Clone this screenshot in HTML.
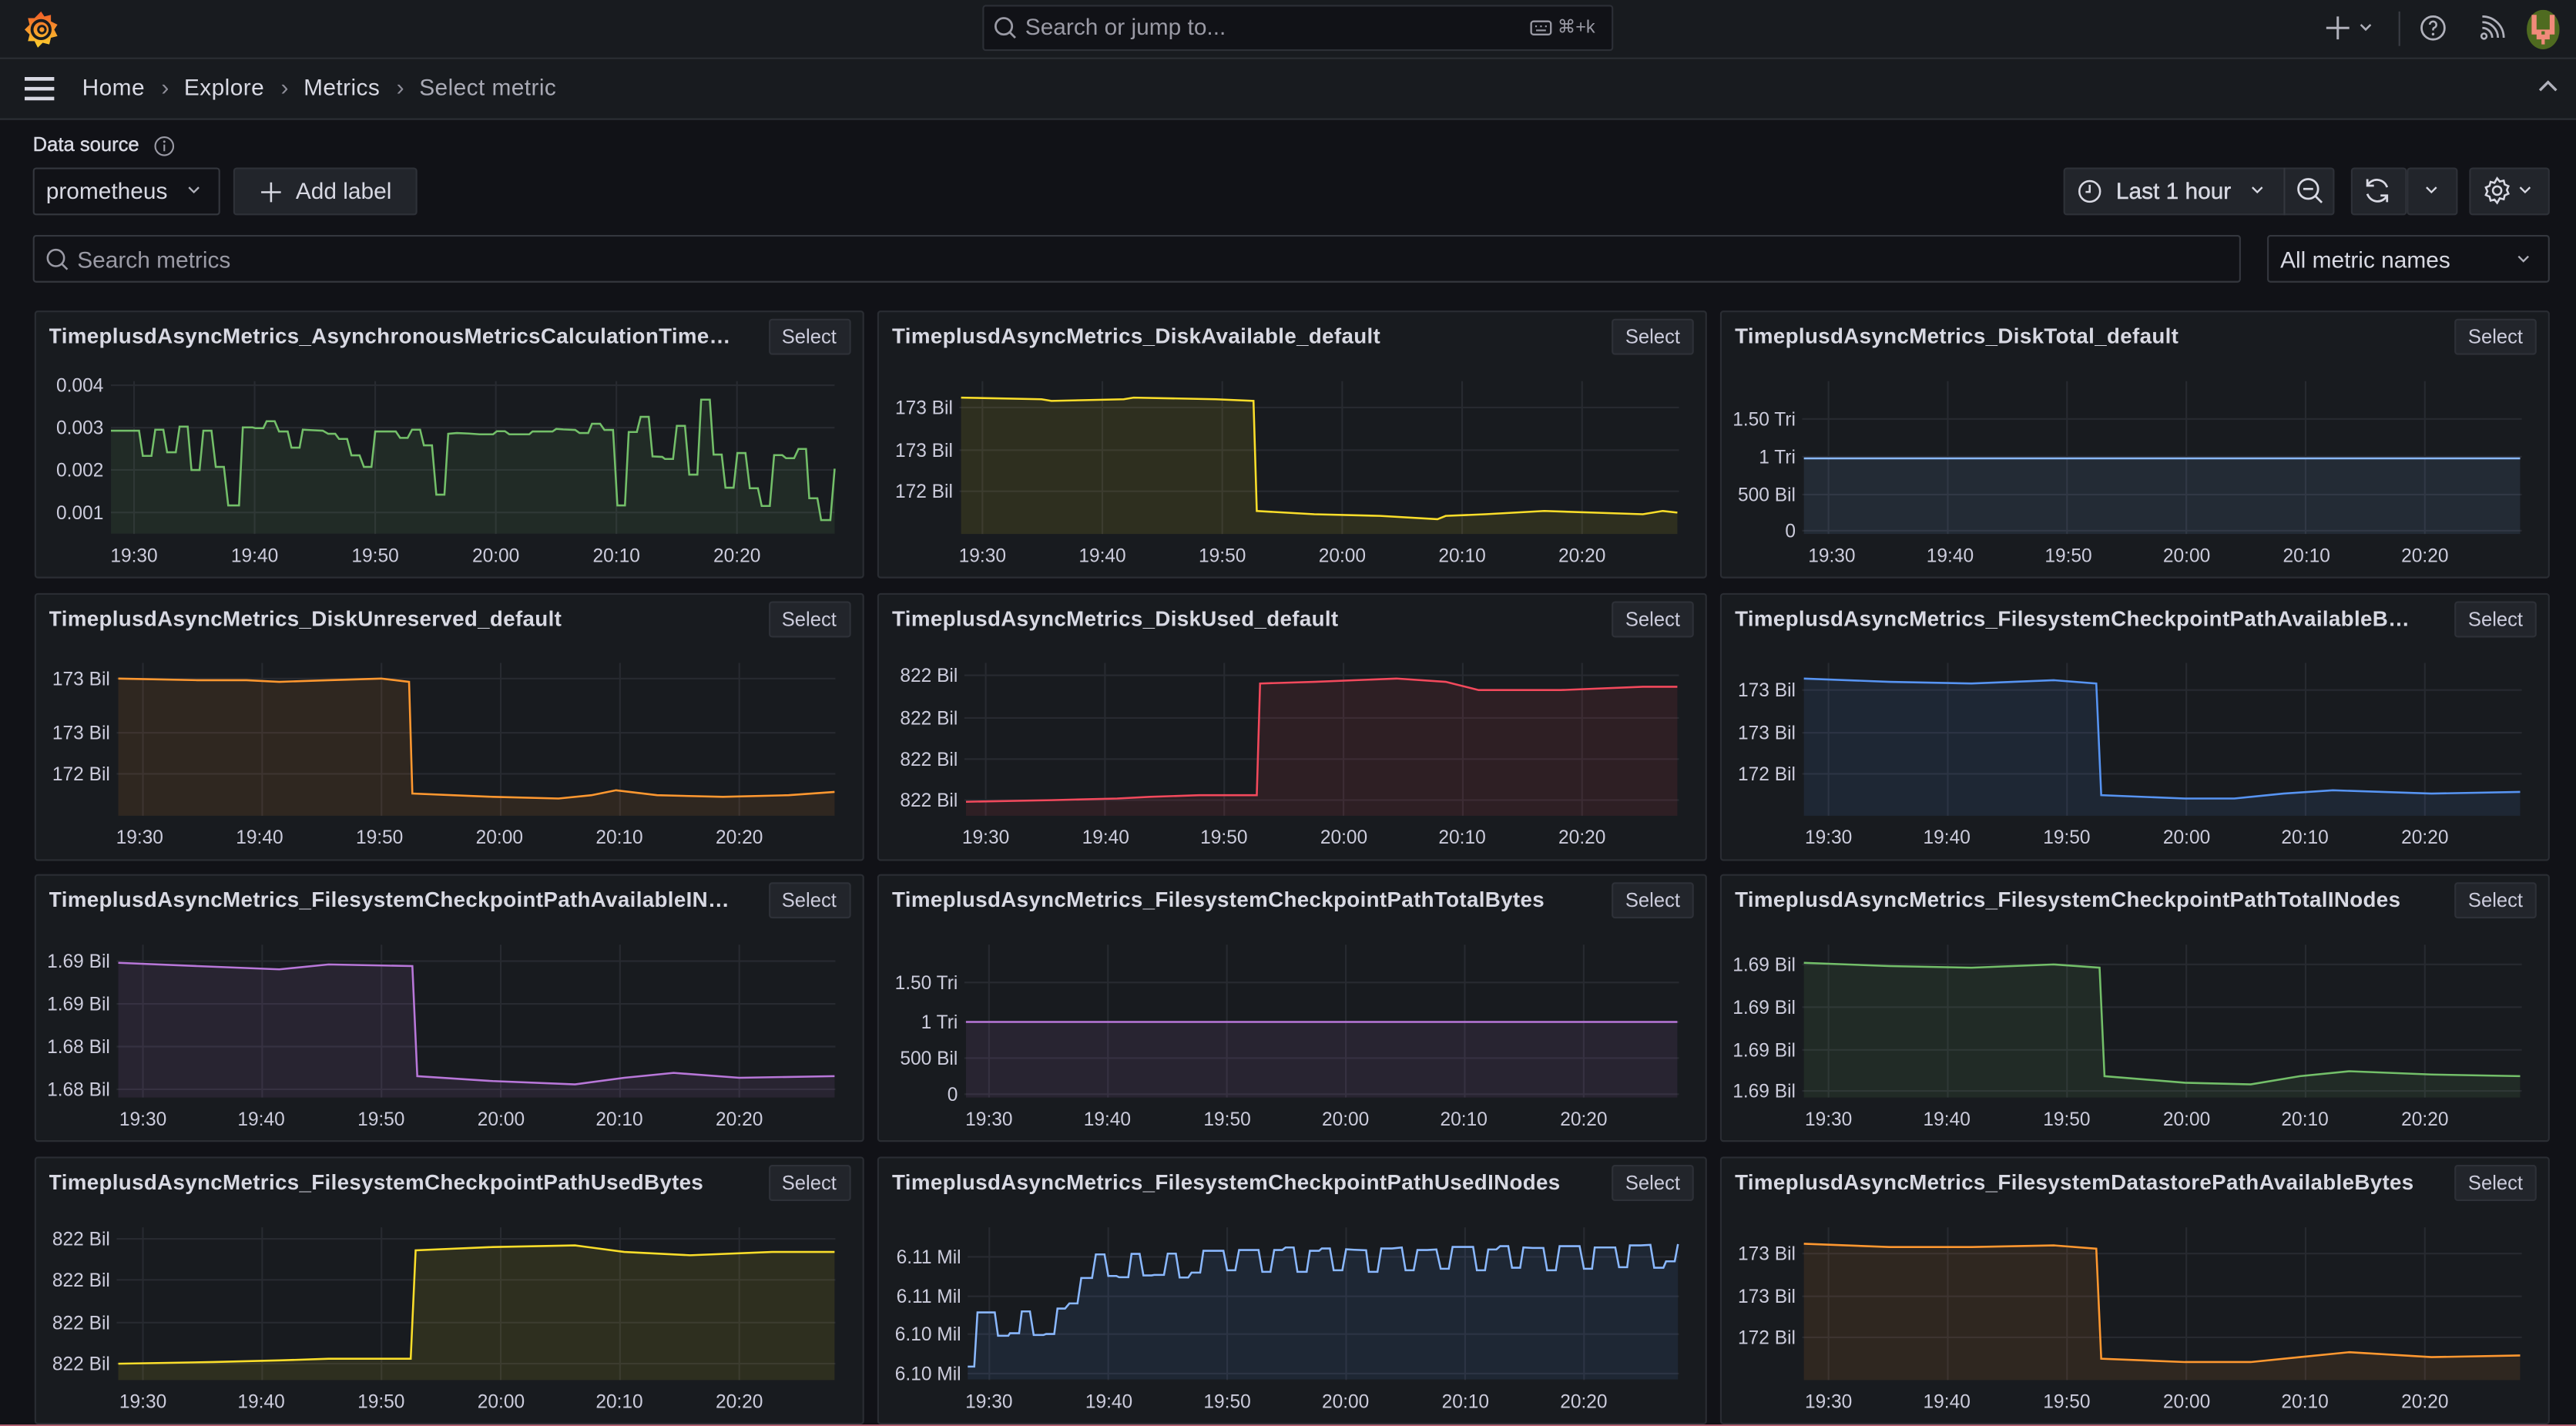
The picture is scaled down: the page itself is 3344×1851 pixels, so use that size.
<!DOCTYPE html>
<html><head><meta charset="utf-8">
<style>
*{box-sizing:border-box;margin:0;padding:0}
html,body{width:3344px;height:1850px;overflow:hidden;background:#111217}
body{font-family:"Liberation Sans",sans-serif;color:#ccccdc}
#root{position:absolute;left:0;top:0;width:1568px;height:868px;transform:scale(2.13265);transform-origin:0 0;background:#111217}
.abs{position:absolute}
.bar{position:absolute;left:0;width:1568px;background:#181b1f;border-bottom:1px solid #2c2f35}
.box{position:absolute;border:1px solid #2e3138;border-radius:2px}
.btn{position:absolute;background:#22252b;border:1px solid #2e3138;border-radius:2px}
.panel{position:absolute;width:505px;height:163px;background:#181b1f;border:1px solid #2a2d33;border-radius:2px}
.pt{position:absolute;left:8px;top:6px;width:418px;font-size:13px;font-weight:bold;letter-spacing:0.16px;line-height:18px;color:#d8d9e3;white-space:nowrap;overflow:hidden;text-overflow:ellipsis}
.sel{position:absolute;left:446px;top:4px;width:50px;height:22px;background:#22252b;border:1px solid #2e3138;border-radius:2px;font-size:12px;line-height:20px;text-align:center;color:#ccccdc}
svg text{font-family:"Liberation Sans",sans-serif}
.gl{stroke:rgba(204,204,220,0.09);stroke-width:1;fill:none}
.yl{font-size:11.5px;fill:#ccccdc;text-anchor:end}
.xl{font-size:11.5px;fill:#ccccdc;text-anchor:middle}
.sep{color:#8e8e99;margin:0 9px 0 10px}
</style></head><body>
<div id="root">
<div class="bar" style="top:0;height:36px"></div>
<svg class="abs" style="left:14px;top:6px" width="22" height="24" viewBox="0 0 22 24">
<defs><linearGradient id="lg" x1="0" y1="1" x2="0" y2="0"><stop offset="0" stop-color="#fcd22e"/><stop offset="1" stop-color="#f05a28"/></linearGradient></defs>
<path d="M11 1 L13 4 L17 3 L17 7 L21 9 L19 12 L21 16 L17 17 L16 21 L12 20 L9 23 L7 19 L3 19 L4 15 L1 12 L4 9 L3 5 L7 5 Z" fill="url(#lg)"/>
<circle cx="11" cy="12" r="5.5" fill="none" stroke="#181b1f" stroke-width="1.8"/>
<circle cx="11.5" cy="12" r="2.2" fill="none" stroke="#181b1f" stroke-width="1.4"/>
</svg>
<div class="box" style="left:598px;top:3px;width:384px;height:28px;background:#111217;border-color:#2c2f36"></div>
<svg class="abs" style="left:604px;top:9px" width="16" height="16" viewBox="0 0 16 16"><circle cx="7" cy="7" r="5" fill="none" stroke="#9a9aa5" stroke-width="1.3"/><path d="M10.5 10.5 L14 14" stroke="#9a9aa5" stroke-width="1.3"/></svg>
<div class="abs" style="left:624px;top:8px;font-size:14px;color:#9a9aa5">Search or jump to...</div>
<svg class="abs" style="left:931px;top:11px" width="14" height="12" viewBox="0 0 14 12"><rect x="1" y="2" width="12" height="8" rx="1.5" fill="none" stroke="#9a9aa5" stroke-width="1.1"/><path d="M3.5 5h1M6.5 5h1M9.5 5h1M4 7.5h6" stroke="#9a9aa5" stroke-width="1"/></svg>
<div class="abs" style="left:948px;top:10px;font-size:11px;color:#9a9aa5">⌘+k</div>
<svg class="abs" style="left:1414px;top:8px" width="36" height="18" viewBox="0 0 36 18"><path d="M9 2v14M2 9h14" stroke="#b0b1bb" stroke-width="1.4"/><path d="M23 7l3 3 3-3" stroke="#b0b1bb" stroke-width="1.2" fill="none"/></svg>
<div class="abs" style="left:1460px;top:7px;width:1px;height:21px;background:#3a3d44"></div>
<svg class="abs" style="left:1472px;top:8px" width="18" height="18" viewBox="0 0 18 18"><circle cx="9" cy="9" r="7" fill="none" stroke="#b0b1bb" stroke-width="1.3"/><path d="M7 7a2 2 0 1 1 2.5 2c-.5.3-.5.7-.5 1.5" stroke="#b0b1bb" stroke-width="1.2" fill="none"/><circle cx="9" cy="12.8" r=".8" fill="#b0b1bb"/></svg>
<svg class="abs" style="left:1509px;top:9px" width="16" height="16" viewBox="0 0 16 16"><circle cx="3" cy="13" r="1.6" fill="none" stroke="#b0b1bb" stroke-width="1.2"/><path d="M2 8a6 6 0 0 1 6 6M2 4.5a9.5 9.5 0 0 1 9.5 9.5M2 1a13 13 0 0 1 13 13" stroke="#b0b1bb" stroke-width="1.3" fill="none"/></svg>
<svg class="abs" style="left:1538px;top:6px" width="20" height="24" viewBox="0 0 20 24"><ellipse cx="10" cy="12" rx="10" ry="12" fill="#4f6b20"/><path d="M3 3h3v9h8V3h3v12h-3v3h-3v3H9v-3H6v-3H3z" fill="#f08a7a"/><rect x="9" y="13" width="2" height="2" fill="#4f6b20"/></svg>
<div class="bar" style="top:36px;height:37px"></div>
<svg class="abs" style="left:14px;top:46px" width="20" height="16" viewBox="0 0 20 16"><path d="M1 2h18M1 8h18M1 14h18" stroke="#d8d9e3" stroke-width="2.2"/></svg>
<div class="abs" style="left:50px;top:45px;font-size:14px;letter-spacing:0.2px;color:#d8d9e3;white-space:nowrap">Home<span class="sep">›</span>Explore<span class="sep">›</span>Metrics<span class="sep">›</span><span style="color:#a9aab5">Select metric</span></div>
<svg class="abs" style="left:1545px;top:48px" width="12" height="10" viewBox="0 0 12 10"><path d="M1 7l5-5 5 5" stroke="#b0b1bb" stroke-width="1.6" fill="none"/></svg>
<div class="abs" style="left:20px;top:81px;font-size:12px;color:#d8d9e3;-webkit-text-stroke:0.2px #d8d9e3">Data source</div>
<svg class="abs" style="left:93px;top:82px" width="14" height="14" viewBox="0 0 14 14"><circle cx="7" cy="7" r="5.5" fill="none" stroke="#9a9aa5" stroke-width="1"/><path d="M7 6v4" stroke="#9a9aa5" stroke-width="1"/><circle cx="7" cy="4.2" r=".7" fill="#9a9aa5"/></svg>
<div class="box" style="left:20px;top:102px;width:114px;height:29px;background:#111217;border-color:#34373e"></div>
<div class="abs" style="left:28px;top:108px;font-size:14px;color:#d8d9e3">prometheus</div>
<svg class="abs" style="left:113px;top:112px" width="10" height="8" viewBox="0 0 10 8"><path d="M2 2l3 3 3-3" stroke="#b0b1bb" stroke-width="1.1" fill="none"/></svg>
<div class="btn" style="left:142px;top:102px;width:112px;height:29px"></div>
<svg class="abs" style="left:158px;top:110px" width="14" height="14" viewBox="0 0 14 14"><path d="M7 1v12M1 7h12" stroke="#d8d9e3" stroke-width="1.2"/></svg>
<div class="abs" style="left:180px;top:108px;font-size:14px;color:#d8d9e3">Add label</div>
<div class="btn" style="left:1256px;top:102px;width:165px;height:29px"></div>
<div class="abs" style="left:1390px;top:102px;width:1px;height:29px;background:#34373e"></div>
<svg class="abs" style="left:1264px;top:108px" width="16" height="17" viewBox="0 0 16 17"><circle cx="8" cy="8.5" r="6.3" fill="none" stroke="#d8d9e3" stroke-width="1.2"/><path d="M8 4.5v4.3H5.5" stroke="#d8d9e3" stroke-width="1.2" fill="none"/></svg>
<div class="abs" style="left:1288px;top:108px;font-size:14px;color:#d8d9e3;-webkit-text-stroke:0.2px #d8d9e3">Last 1 hour</div>
<svg class="abs" style="left:1369px;top:112px" width="10" height="8" viewBox="0 0 10 8"><path d="M2 2l3 3 3-3" stroke="#d8d9e3" stroke-width="1.1" fill="none"/></svg>
<svg class="abs" style="left:1397px;top:107px" width="18" height="18" viewBox="0 0 18 18"><circle cx="8" cy="8" r="6" fill="none" stroke="#d8d9e3" stroke-width="1.3"/><path d="M5 8h6M12.3 12.3l4 4" stroke="#d8d9e3" stroke-width="1.3"/></svg>
<div class="btn" style="left:1431px;top:102px;width:34px;height:29px"></div>
<div class="btn" style="left:1465px;top:102px;width:31px;height:29px"></div>
<svg class="abs" style="left:1438px;top:107px" width="18" height="18" viewBox="0 0 18 18"><path d="M3 6a6.5 6.5 0 0 1 12 1M15 12a6.5 6.5 0 0 1-12-1" stroke="#d8d9e3" stroke-width="1.3" fill="none"/><path d="M3 2v4h4M15 16v-4h-4" stroke="#d8d9e3" stroke-width="1.3" fill="none"/></svg>
<svg class="abs" style="left:1475px;top:112px" width="10" height="8" viewBox="0 0 10 8"><path d="M2 2l3 3 3-3" stroke="#d8d9e3" stroke-width="1.1" fill="none"/></svg>
<div class="btn" style="left:1503px;top:102px;width:49px;height:29px"></div>
<svg class="abs" style="left:1511px;top:107px" width="18" height="18" viewBox="0 0 18 18"><path d="M9 1.5l1.6 2 2.4-.6.6 2.4 2.3 1-1 2.3 1 2.3-2.3 1-.6 2.4-2.4-.6L9 16.5l-1.6-2-2.4.6-.6-2.4-2.3-1 1-2.3-1-2.3 2.3-1 .6-2.4 2.4.6z" fill="none" stroke="#d8d9e3" stroke-width="1.2"/><circle cx="9" cy="9" r="2.6" fill="none" stroke="#d8d9e3" stroke-width="1.2"/></svg>
<svg class="abs" style="left:1532px;top:112px" width="10" height="8" viewBox="0 0 10 8"><path d="M2 2l3 3 3-3" stroke="#d8d9e3" stroke-width="1.1" fill="none"/></svg>
<div class="box" style="left:20px;top:143px;width:1344px;height:29px;background:#111217;border-color:#34373e"></div>
<svg class="abs" style="left:27px;top:150px" width="16" height="16" viewBox="0 0 16 16"><circle cx="7" cy="7" r="5" fill="none" stroke="#9a9aa5" stroke-width="1.2"/><path d="M10.5 10.5 L14 14" stroke="#9a9aa5" stroke-width="1.2"/></svg>
<div class="abs" style="left:47px;top:150px;font-size:14px;color:#9a9aa5">Search metrics</div>
<div class="box" style="left:1380px;top:143px;width:172px;height:29px;background:#111217;border-color:#34373e"></div>
<div class="abs" style="left:1388px;top:150px;font-size:14px;color:#d8d9e3">All metric names</div>
<svg class="abs" style="left:1531px;top:154px" width="10" height="8" viewBox="0 0 10 8"><path d="M2 2l3 3 3-3" stroke="#b0b1bb" stroke-width="1.1" fill="none"/></svg>

<div class="panel" style="left:20.5px;top:189px"><div class="pt">TimeplusdAsyncMetrics_AsynchronousMetricsCalculationTimeSpent</div><div class="sel">Select</div></div>
<div class="panel" style="left:534px;top:189px"><div class="pt">TimeplusdAsyncMetrics_DiskAvailable_default</div><div class="sel">Select</div></div>
<div class="panel" style="left:1047px;top:189px"><div class="pt">TimeplusdAsyncMetrics_DiskTotal_default</div><div class="sel">Select</div></div>
<div class="panel" style="left:20.5px;top:360.5px"><div class="pt">TimeplusdAsyncMetrics_DiskUnreserved_default</div><div class="sel">Select</div></div>
<div class="panel" style="left:534px;top:360.5px"><div class="pt">TimeplusdAsyncMetrics_DiskUsed_default</div><div class="sel">Select</div></div>
<div class="panel" style="left:1047px;top:360.5px"><div class="pt">TimeplusdAsyncMetrics_FilesystemCheckpointPathAvailableBytes</div><div class="sel">Select</div></div>
<div class="panel" style="left:20.5px;top:532px"><div class="pt">TimeplusdAsyncMetrics_FilesystemCheckpointPathAvailableINodes</div><div class="sel">Select</div></div>
<div class="panel" style="left:534px;top:532px"><div class="pt">TimeplusdAsyncMetrics_FilesystemCheckpointPathTotalBytes</div><div class="sel">Select</div></div>
<div class="panel" style="left:1047px;top:532px"><div class="pt">TimeplusdAsyncMetrics_FilesystemCheckpointPathTotalINodes</div><div class="sel">Select</div></div>
<div class="panel" style="left:20.5px;top:704px"><div class="pt">TimeplusdAsyncMetrics_FilesystemCheckpointPathUsedBytes</div><div class="sel">Select</div></div>
<div class="panel" style="left:534px;top:704px"><div class="pt">TimeplusdAsyncMetrics_FilesystemCheckpointPathUsedINodes</div><div class="sel">Select</div></div>
<div class="panel" style="left:1047px;top:704px"><div class="pt">TimeplusdAsyncMetrics_FilesystemDatastorePathAvailableBytes</div><div class="sel">Select</div></div>

<svg class="abs" style="left:0;top:0" width="1568" height="868" viewBox="0 0 1568 868">
<g class="gl"><path d="M67.5 234.5H508M67.5 260.3H508M67.5 286H508M67.5 311.9H508M81.6 232V325M155 232V325M228.4 232V325M301.8 232V325M375.2 232V325M448.6 232V325"/></g>
<text class="yl" x="63" y="238.5">0.004</text><text class="yl" x="63" y="264.3">0.003</text><text class="yl" x="63" y="290">0.002</text><text class="yl" x="63" y="316">0.001</text>
<g class="xl"><text x="81.6" y="342">19:30</text><text x="155" y="342">19:40</text><text x="228.4" y="342">19:50</text><text x="301.8" y="342">20:00</text><text x="375.2" y="342">20:10</text><text x="448.6" y="342">20:20</text></g>
<g transform="matrix(0.329 0 0 0.1563 13.9 182.9)">
<polygon fill="rgba(115,191,105,0.1)" points="163,507 215,507 222,605 238,605 245,503 260,503 267,591 283,591 290,491 305,491 312,660 327,660 334,507 349,507 357,648 372,648 380,798 400,798 407,494 425,494 430,497 445,497 451,470 466,470 474,510 490,510 497,573 512,573 518,503 535,505 555,507 565,519 578,519 585,539 600,539 608,603 623,603 631,648 645,648 652,510 690,510 698,535 712,535 720,503 735,503 742,564 757,564 765,756 780,756 787,519 803,516 825,518 845,521 870,521 877,509 892,509 900,521 937,521 943,510 980,510 987,500 1000,502 1022,504 1030,516 1046,516 1053,480 1068,480 1076,504 1092,504 1100,798 1114,798 1121,512 1136,512 1143,453 1158,453 1165,607 1183,609 1188,617 1203,617 1210,488 1225,488 1233,678 1248,678 1255,386 1271,386 1278,600 1293,600 1300,729 1315,729 1322,594 1337,594 1345,731 1360,731 1367,800 1382,800 1390,602 1405,602 1412,614 1427,614 1435,578 1449,578 1455,770 1470,770 1477,855 1494,855 1502,655 1502,908 163,908"/>
<polyline fill="none" stroke="#73bf69" stroke-width="1.2" vector-effect="non-scaling-stroke" points="163,507 215,507 222,605 238,605 245,503 260,503 267,591 283,591 290,491 305,491 312,660 327,660 334,507 349,507 357,648 372,648 380,798 400,798 407,494 425,494 430,497 445,497 451,470 466,470 474,510 490,510 497,573 512,573 518,503 535,505 555,507 565,519 578,519 585,539 600,539 608,603 623,603 631,648 645,648 652,510 690,510 698,535 712,535 720,503 735,503 742,564 757,564 765,756 780,756 787,519 803,516 825,518 845,521 870,521 877,509 892,509 900,521 937,521 943,510 980,510 987,500 1000,502 1022,504 1030,516 1046,516 1053,480 1068,480 1076,504 1092,504 1100,798 1114,798 1121,512 1136,512 1143,453 1158,453 1165,607 1183,609 1188,617 1203,617 1210,488 1225,488 1233,678 1248,678 1255,386 1271,386 1278,600 1293,600 1300,729 1315,729 1322,594 1337,594 1345,731 1360,731 1367,800 1382,800 1390,602 1405,602 1412,614 1427,614 1435,578 1449,578 1455,770 1470,770 1477,855 1494,855 1502,655"/>
</g>
<g class="gl"><path d="M584 248H1022M584 274H1022M584 299H1022M598 232V325M671 232V325M744 232V325M817 232V325M890 232V325M963 232V325"/></g>
<text class="yl" x="580" y="252">173 Bil</text><text class="yl" x="580" y="278">173 Bil</text><text class="yl" x="580" y="303">172 Bil</text>
<g class="xl"><text x="598" y="342">19:30</text><text x="671" y="342">19:40</text><text x="744" y="342">19:50</text><text x="817" y="342">20:00</text><text x="890" y="342">20:10</text><text x="963" y="342">20:20</text></g>
<polygon fill="rgba(250,222,42,0.1)" points="585,242 634,243 640,244 684,243 690,242 740,243 763,244 765,311 800,313 840,314 875,316 880,314 904,313 940,311 970,312 1000,313 1012,311 1021,312 1021,325 585,325"/>
<polyline fill="none" stroke="#fade2a" stroke-width="1.2" points="585,242 634,243 640,244 684,243 690,242 740,243 763,244 765,311 800,313 840,314 875,316 880,314 904,313 940,311 970,312 1000,313 1012,311 1021,312"/>
<g class="gl"><path d="M1097 255H1535M1097 278H1535M1097 301H1535M1097 323H1535M1113 232V325M1185.6 232V325M1258.2 232V325M1330.8 232V325M1403.4 232V325M1476 232V325"/></g>
<text class="yl" x="1093" y="259">1.50 Tri</text><text class="yl" x="1093" y="282">1 Tri</text><text class="yl" x="1093" y="305">500 Bil</text><text class="yl" x="1093" y="327">0</text>
<g class="xl"><text x="1115" y="342">19:30</text><text x="1187" y="342">19:40</text><text x="1259" y="342">19:50</text><text x="1331" y="342">20:00</text><text x="1404" y="342">20:10</text><text x="1476" y="342">20:20</text></g>
<rect x="1098" y="279" width="436" height="46" fill="rgba(138,184,255,0.1)"/>
<path d="M1098 279H1534" stroke="#8ab8ff" stroke-width="1.2"/>
<g class="gl"><path d="M71 413H508.5M71 446H508.5M71 471H508.5M87 403.5V496.5M159.6 403.5V496.5M232.2 403.5V496.5M304.8 403.5V496.5M377.4 403.5V496.5M450 403.5V496.5"/></g>
<text class="yl" x="67" y="417">173 Bil</text><text class="yl" x="67" y="450">173 Bil</text><text class="yl" x="67" y="475">172 Bil</text>
<g class="xl"><text x="85" y="513.5">19:30</text><text x="158" y="513.5">19:40</text><text x="231" y="513.5">19:50</text><text x="304" y="513.5">20:00</text><text x="377" y="513.5">20:10</text><text x="450" y="513.5">20:20</text></g>
<polygon fill="rgba(255,152,48,0.1)" points="72,413 120,414 150,414 170,415 200,414 232,413 249,415 251,483 300,485 340,486 360,484 375,481 400,484 440,485 480,484 508,482 508,496.5 72,496.5"/>
<polyline fill="none" stroke="#ff9830" stroke-width="1.2" points="72,413 120,414 150,414 170,415 200,414 232,413 249,415 251,483 300,485 340,486 360,484 375,481 400,484 440,485 480,484 508,482"/>
<g class="gl"><path d="M587 411H1022M587 437H1022M587 462H1022M587 487H1022M600 403.5V496.5M672.6 403.5V496.5M745.2 403.5V496.5M817.8 403.5V496.5M890.4 403.5V496.5M963 403.5V496.5"/></g>
<text class="yl" x="583" y="415">822 Bil</text><text class="yl" x="583" y="441">822 Bil</text><text class="yl" x="583" y="466">822 Bil</text><text class="yl" x="583" y="491">822 Bil</text>
<g class="xl"><text x="600" y="513.5">19:30</text><text x="673" y="513.5">19:40</text><text x="745" y="513.5">19:50</text><text x="818" y="513.5">20:00</text><text x="890" y="513.5">20:10</text><text x="963" y="513.5">20:20</text></g>
<polygon fill="rgba(242,73,92,0.1)" points="588,488 640,487 680,486 700,485 730,484 765,484 767,416 800,415 850,413 880,415 900,420 950,420 1000,418 1021,418 1021,496.5 588,496.5"/>
<polyline fill="none" stroke="#f2495c" stroke-width="1.2" points="588,488 640,487 680,486 700,485 730,484 765,484 767,416 800,415 850,413 880,415 900,420 950,420 1000,418 1021,418"/>
<g class="gl"><path d="M1097 420H1535M1097 446H1535M1097 471H1535M1113 403.5V496.5M1185.6 403.5V496.5M1258.2 403.5V496.5M1330.8 403.5V496.5M1403.4 403.5V496.5M1476 403.5V496.5"/></g>
<text class="yl" x="1093" y="424">173 Bil</text><text class="yl" x="1093" y="450">173 Bil</text><text class="yl" x="1093" y="475">172 Bil</text>
<g class="xl"><text x="1113" y="513.5">19:30</text><text x="1185" y="513.5">19:40</text><text x="1258" y="513.5">19:50</text><text x="1331" y="513.5">20:00</text><text x="1403" y="513.5">20:10</text><text x="1476" y="513.5">20:20</text></g>
<polygon fill="rgba(87,148,242,0.1)" points="1098,413 1150,415 1200,416 1250,414 1276,416 1279,484 1330,486 1360,486 1390,483 1420,481 1480,483 1534,482 1534,496.5 1098,496.5"/>
<polyline fill="none" stroke="#5794f2" stroke-width="1.2" points="1098,413 1150,415 1200,416 1250,414 1276,416 1279,484 1330,486 1360,486 1390,483 1420,481 1480,483 1534,482"/>
<g class="gl"><path d="M71 585H508.5M71 611H508.5M71 637H508.5M71 663H508.5M87 575V668M159.6 575V668M232.2 575V668M304.8 575V668M377.4 575V668M450 575V668"/></g>
<text class="yl" x="67" y="589">1.69 Bil</text><text class="yl" x="67" y="615">1.69 Bil</text><text class="yl" x="67" y="641">1.68 Bil</text><text class="yl" x="67" y="667">1.68 Bil</text>
<g class="xl"><text x="87" y="685">19:30</text><text x="159" y="685">19:40</text><text x="232" y="685">19:50</text><text x="305" y="685">20:00</text><text x="377" y="685">20:10</text><text x="450" y="685">20:20</text></g>
<polygon fill="rgba(184,119,217,0.1)" points="72,586 120,588 170,590 200,587 251,588 254,655 300,658 350,660 380,656 410,653 450,656 508,655 508,668 72,668"/>
<polyline fill="none" stroke="#b877d9" stroke-width="1.2" points="72,586 120,588 170,590 200,587 251,588 254,655 300,658 350,660 380,656 410,653 450,656 508,655"/>
<g class="gl"><path d="M587 598H1022M587 622H1022M587 644H1022M587 666H1022M602 575V668M674.4 575V668M746.8 575V668M819.2 575V668M891.6 575V668M964 575V668"/></g>
<text class="yl" x="583" y="602">1.50 Tri</text><text class="yl" x="583" y="626">1 Tri</text><text class="yl" x="583" y="648">500 Bil</text><text class="yl" x="583" y="670">0</text>
<g class="xl"><text x="602" y="685">19:30</text><text x="674" y="685">19:40</text><text x="747" y="685">19:50</text><text x="819" y="685">20:00</text><text x="891" y="685">20:10</text><text x="964" y="685">20:20</text></g>
<rect x="588" y="622" width="433" height="46" fill="rgba(184,119,217,0.1)"/>
<path d="M588 622H1021" stroke="#b877d9" stroke-width="1.2"/>
<g class="gl"><path d="M1097 587H1535M1097 613H1535M1097 639H1535M1097 664H1535M1113 575V668M1185.6 575V668M1258.2 575V668M1330.8 575V668M1403.4 575V668M1476 575V668"/></g>
<text class="yl" x="1093" y="591">1.69 Bil</text><text class="yl" x="1093" y="617">1.69 Bil</text><text class="yl" x="1093" y="643">1.69 Bil</text><text class="yl" x="1093" y="668">1.69 Bil</text>
<g class="xl"><text x="1113" y="685">19:30</text><text x="1185" y="685">19:40</text><text x="1258" y="685">19:50</text><text x="1331" y="685">20:00</text><text x="1403" y="685">20:10</text><text x="1476" y="685">20:20</text></g>
<polygon fill="rgba(115,191,105,0.1)" points="1098,586 1150,588 1200,589 1250,587 1278,589 1281,655 1330,659 1370,660 1400,655 1430,652 1480,654 1534,655 1534,668 1098,668"/>
<polyline fill="none" stroke="#73bf69" stroke-width="1.2" points="1098,586 1150,588 1200,589 1250,587 1278,589 1281,655 1330,659 1370,660 1400,655 1430,652 1480,654 1534,655"/>
<g class="gl"><path d="M71 754H508.5M71 779H508.5M71 805H508.5M71 830H508.5M87 747V840M159.6 747V840M232.2 747V840M304.8 747V840M377.4 747V840M450 747V840"/></g>
<text class="yl" x="67" y="758">822 Bil</text><text class="yl" x="67" y="783">822 Bil</text><text class="yl" x="67" y="809">822 Bil</text><text class="yl" x="67" y="834">822 Bil</text>
<g class="xl"><text x="87" y="857">19:30</text><text x="159" y="857">19:40</text><text x="232" y="857">19:50</text><text x="305" y="857">20:00</text><text x="377" y="857">20:10</text><text x="450" y="857">20:20</text></g>
<polygon fill="rgba(250,222,42,0.1)" points="72,830 130,829 170,828 200,827 250,827 253,761 300,759 350,758 380,762 420,764 470,762 508,762 508,840 72,840"/>
<polyline fill="none" stroke="#fade2a" stroke-width="1.2" points="72,830 130,829 170,828 200,827 250,827 253,761 300,759 350,758 380,762 420,764 470,762 508,762"/>
<g class="gl"><path d="M589 765H1022M589 789H1022M589 812H1022M589 836H1022M602.2 747V840M674.6 747V840M747 747V840M819.4 747V840M891.8 747V840M964.2 747V840"/></g>
<text class="yl" x="585" y="769">6.11 Mil</text><text class="yl" x="585" y="793">6.11 Mil</text><text class="yl" x="585" y="816">6.10 Mil</text><text class="yl" x="585" y="840">6.10 Mil</text>
<g class="xl"><text x="602" y="857">19:30</text><text x="675" y="857">19:40</text><text x="747" y="857">19:50</text><text x="819" y="857">20:00</text><text x="892" y="857">20:10</text><text x="964" y="857">20:20</text></g>
<g transform="matrix(0.329 0 0 0.1563 529.85 703.3)">
<polygon fill="rgba(87,148,242,0.1)" points="180,822 192,822 198,611 230,611 236,702 255,702 258,692 275,692 280,607 295,607 302,699 320,699 325,695 340,695 346,596 360,596 368,576 383,576 390,477 410,477 417,385 433,385 440,469 455,469 460,474 477,474 483,383 498,383 505,467 520,467 525,465 543,465 550,382 565,382 572,475 588,475 594,456 610,456 616,371 653,371 660,447 675,447 682,368 718,368 725,453 740,453 747,368 762,368 768,358 783,358 790,453 807,453 813,371 830,371 835,362 850,362 857,447 873,447 880,365 895,367 917,369 922,453 938,453 945,362 965,362 983,358 990,447 1005,447 1012,368 1030,368 1047,366 1055,441 1070,441 1077,356 1115,356 1122,447 1137,447 1143,366 1158,366 1165,353 1180,353 1187,437 1202,437 1208,358 1225,360 1245,360 1252,447 1268,447 1275,353 1312,353 1320,441 1335,441 1340,358 1378,358 1385,435 1400,435 1405,350 1425,350 1443,348 1450,437 1467,437 1472,412 1488,412 1494,345 1494,872 180,872"/>
<polyline fill="none" stroke="#8ab8ff" stroke-width="1.2" vector-effect="non-scaling-stroke" points="180,822 192,822 198,611 230,611 236,702 255,702 258,692 275,692 280,607 295,607 302,699 320,699 325,695 340,695 346,596 360,596 368,576 383,576 390,477 410,477 417,385 433,385 440,469 455,469 460,474 477,474 483,383 498,383 505,467 520,467 525,465 543,465 550,382 565,382 572,475 588,475 594,456 610,456 616,371 653,371 660,447 675,447 682,368 718,368 725,453 740,453 747,368 762,368 768,358 783,358 790,453 807,453 813,371 830,371 835,362 850,362 857,447 873,447 880,365 895,367 917,369 922,453 938,453 945,362 965,362 983,358 990,447 1005,447 1012,368 1030,368 1047,366 1055,441 1070,441 1077,356 1115,356 1122,447 1137,447 1143,366 1158,366 1165,353 1180,353 1187,437 1202,437 1208,358 1225,360 1245,360 1252,447 1268,447 1275,353 1312,353 1320,441 1335,441 1340,358 1378,358 1385,435 1400,435 1405,350 1425,350 1443,348 1450,437 1467,437 1472,412 1488,412 1494,345"/>
</g>
<g class="gl"><path d="M1097 763H1535M1097 789H1535M1097 814H1535M1113 747V840M1185.6 747V840M1258.2 747V840M1330.8 747V840M1403.4 747V840M1476 747V840"/></g>
<text class="yl" x="1093" y="767">173 Bil</text><text class="yl" x="1093" y="793">173 Bil</text><text class="yl" x="1093" y="818">172 Bil</text>
<g class="xl"><text x="1113" y="857">19:30</text><text x="1185" y="857">19:40</text><text x="1258" y="857">19:50</text><text x="1331" y="857">20:00</text><text x="1403" y="857">20:10</text><text x="1476" y="857">20:20</text></g>
<polygon fill="rgba(255,152,48,0.1)" points="1098,757 1150,759 1200,759 1250,758 1276,760 1279,827 1330,829 1370,829 1400,826 1430,823 1480,826 1534,825 1534,840 1098,840"/>
<polyline fill="none" stroke="#ff9830" stroke-width="1.2" points="1098,757 1150,759 1200,759 1250,758 1276,760 1279,827 1330,829 1370,829 1400,826 1430,823 1480,826 1534,825"/>
</svg>
<div class="abs" style="left:0;top:866.6px;width:1568px;height:1.4px;background:#b06070"></div>
</div>
</body></html>
